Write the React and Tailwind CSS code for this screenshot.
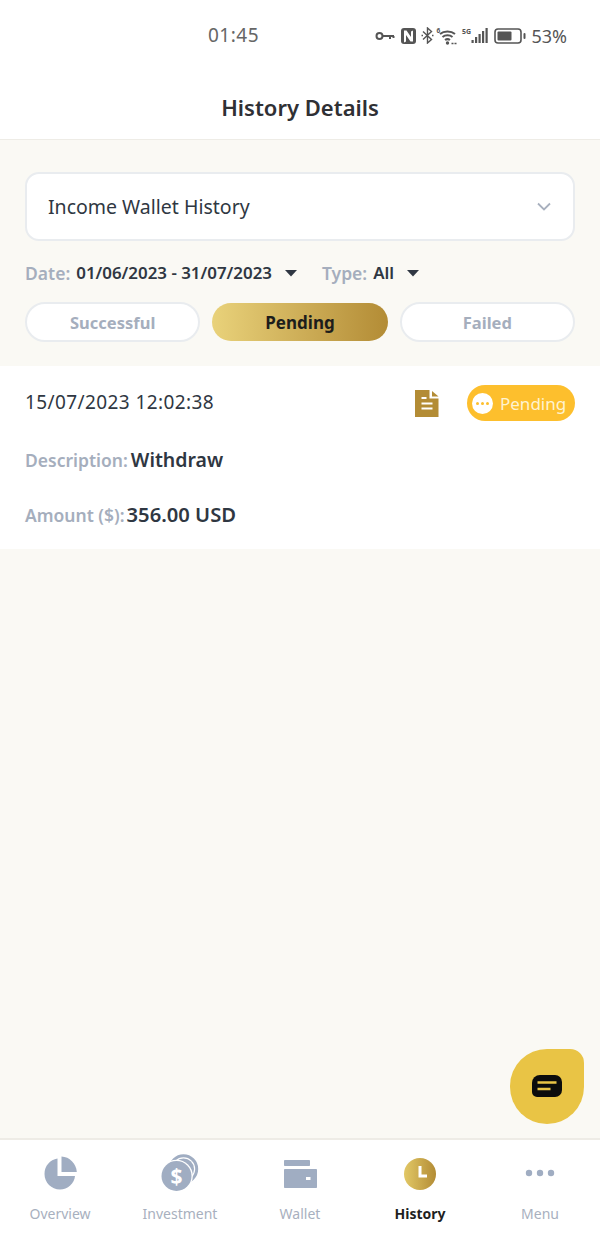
import React from "react";

const FONT = { fontFamily: '"Noto Sans", "Open Sans", sans-serif' };

function StatusIcons() {
  return (
    <div className="flex items-center text-[#555]">
      {/* key */}
      <svg width="20" height="10" viewBox="0 0 20 10" fill="none" stroke="#555" strokeWidth="2">
        <circle cx="4.500" cy="5" r="3" />
        <path d="M8 5h11M15 5v3M18.500 5v2" />
      </svg>
      {/* nfc */}
      <svg className="ml-[6px]" width="15" height="16" viewBox="0 0 15 16">
        <rect x="0" y="0" width="15" height="16" rx="3" fill="#555" />
        <path d="M3 2.500h2.500l4.500 6.500V3.500l2-1v11h-2.500L5 7v6.500l-2 1z" fill="#fff" />
      </svg>
      {/* bluetooth */}
      <svg className="ml-[5px]" width="13" height="17" viewBox="0 0 13 17" fill="none" stroke="#555" strokeWidth="1.400">
        <path d="M2 4.500l8.500 8-4 3.500V1l4 3.500L2 12.500" />
        <path d="M.5 8.500h1.500M11 8.500h1.500" />
      </svg>
      {/* wifi */}
      <svg className="ml-[2px] overflow-visible" width="23" height="18" viewBox="0 0 23 18" fill="none" stroke="#555" strokeWidth="2">
        <path d="M4 7c4-3.400 11-3.400 15 0" />
        <path d="M6.500 10c2.700-2.200 7.300-2.200 10 0" />
        <path d="M9 13c1.400-1 3.600-1 5 0" />
        <circle cx="11.500" cy="16" r="1.700" fill="#555" stroke="none" />
        <path d="M15.500 16.500h6" strokeWidth="1.500" strokeDasharray="2 1" />
        <text x="0.500" y="6" fontSize="6.500" fontWeight="700" fill="#555" stroke="none">6</text>
      </svg>
      {/* signal */}
      <svg className="ml-[3px] overflow-visible" width="27" height="17" viewBox="0 0 27 17" fill="#555">
        <text x="0" y="7" fontSize="7" fontWeight="700">5G</text>
        <rect x="9.500" y="13" width="2.200" height="3" />
        <rect x="13" y="10" width="2.200" height="6" />
        <rect x="16.500" y="7" width="2.200" height="9" />
        <rect x="20" y="4" width="2.200" height="12" />
        <rect x="23.500" y="1" width="2.200" height="15" />
      </svg>
      {/* battery */}
      <svg className="ml-[5px]" width="32" height="16" viewBox="0 0 32 16">
        <rect x="1" y="1" width="26" height="14" rx="3" fill="none" stroke="#555" strokeWidth="1.600" />
        <rect x="3.500" y="3.500" width="14" height="9" rx="1" fill="#555" />
        <rect x="29.500" y="5" width="2" height="6" rx="1" fill="#555" />
      </svg>
      <span className="ml-[5px] text-[18px] leading-none">53%</span>
    </div>
  );
}

function Caret() {
  return (
    <svg width="12" height="7" viewBox="0 0 12 7" className="block">
      <path d="M0 0h12L6 6.500z" fill="#2f3742" />
    </svg>
  );
}

function Pill({ children, active }) {
  if (active) {
    return (
      <div className="flex h-[38px] w-[176px] items-center justify-center rounded-full bg-gradient-to-r from-[#e9d27a] to-[#b38c35] pt-[2px] text-[17px] font-bold text-[#1d1d1b]">
        {children}
      </div>
    );
  }
  return (
    <div className="flex h-[40px] w-[176px] items-center justify-center rounded-full border-2 border-[#e9ecef] bg-white pt-[2px] text-[16.500px] font-bold text-[#a5aebd]">
      {children}
    </div>
  );
}

function NavItem({ icon, label, active }) {
  return (
    <div className="flex w-[120px] flex-col items-center">
      <div className="flex h-[38px] items-center justify-center">{icon}</div>
      <span className={`mt-[12px] text-[14px] leading-[20px] ${active ? "font-bold text-[#1f1f1f]" : "text-[#a8b0be]"}`}>
        {label}
      </span>
    </div>
  );
}

const navIcons = {
  overview: (
    <svg width="34" height="34" viewBox="0 0 34 34" fill="#a0adc2">
      <path d="M14.500 2.500v17.500h17.500c-.6 7.600-7.200 13.500-15 13.500C8.400 33.500 1.500 26.600 1.500 18 1.500 10 7 3.500 14.500 2.500z" />
      <path d="M18.500 .5c8 .4 14.700 6.800 15.300 15.500H18.500z" />
    </svg>
  ),
  investment: (
    <svg width="38" height="38" viewBox="0 0 38 38">
      <circle cx="22.500" cy="15" r="13.200" fill="#fff" stroke="#a0adc2" strokeWidth="3" />
      <circle cx="22.500" cy="15" r="10.500" fill="#a0adc2" />
      <circle cx="15.500" cy="22" r="16.300" fill="#fff" />
      <circle cx="15.500" cy="22" r="15" fill="#a0adc2" />
      <text x="15.500" y="29.500" fontSize="21" fontWeight="700" fill="#fff" textAnchor="middle" fontFamily="Noto Sans">$</text>
    </svg>
  ),
  wallet: (
    <svg width="33" height="30" viewBox="0 -2 33 30" fill="#a0adc2">
      <rect x="0" y="0" width="26" height="6" rx="0.800" />
      <rect x="0" y="9" width="33" height="19" rx="0.800" />
      <rect x="22" y="17" width="4.500" height="3" fill="#fff" />
    </svg>
  ),
  history: (
    <svg width="32" height="34" viewBox="0 -2 32 34">
      <defs>
        <linearGradient id="hist" x1="0" y1="0" x2="1" y2="0">
          <stop offset="0" stopColor="#e2c866" />
          <stop offset="1" stopColor="#b38c35" />
        </linearGradient>
      </defs>
      <circle cx="16" cy="16" r="16" fill="url(#hist)" />
      <path d="M16 8v10h7" fill="none" stroke="#fff" strokeWidth="3" />
    </svg>
  ),
  menu: (
    <svg width="30" height="8" viewBox="0 0 30 8" fill="#a0adc2">
      <circle cx="4" cy="4" r="3.200" />
      <circle cx="15" cy="4" r="3.200" />
      <circle cx="26" cy="4" r="3.200" />
    </svg>
  ),
};

export default function App() {
  return (
    <div className="relative flex h-[1238px] w-[600px] flex-col overflow-hidden bg-white" style={FONT}>
      {/* status bar */}
      <div className="flex h-[70px] items-center justify-between pl-[208px] pr-[33px] pt-[1px]">
        <span className="text-[19px] leading-none tracking-[0.5px] text-[#666]">01:45</span>
        <StatusIcons />
      </div>

      <div className="flex h-[70px] items-center justify-center border-b border-[#eeece6] pt-[6px]">
        <h1 className="text-[22px] font-semibold text-[#2f3034]">History Details</h1>
      </div>

      <main className="flex-1 bg-[#faf9f4]">
        <div className="px-[25px] pt-[32px]">
          <div className="flex h-[69px] items-center justify-between rounded-[14px] border-2 border-[#e9ecef] bg-white pl-[21px] pr-[21px]">
            <span className="text-[19.500px] text-[#2f3742]">Income Wallet History</span>
            <svg width="16" height="10" viewBox="0 0 16 10" fill="none" stroke="#a8b0be" strokeWidth="1.800">
              <path d="M2 1.500l6 6 6-6" />
            </svg>
          </div>

          <div className="mt-[20px] flex h-[24px] items-center text-[16.900px] font-semibold">
            <span className="text-[17.500px] text-[#a5aebd]">Date:</span>
            <span className="ml-[6px] text-[#2f3742]">01/06/2023 - 31/07/2023</span>
            <span className="ml-[13px]"><Caret /></span>
            <span className="ml-[25px] text-[17.500px] text-[#a5aebd]">Type:</span>
            <span className="ml-[6px] text-[#2f3742]">All</span>
            <span className="ml-[13px]"><Caret /></span>
          </div>

          <div className="mt-[17px] flex items-center gap-[12px]">
            <Pill>Successful</Pill>
            <Pill active>Pending</Pill>
            <Pill>Failed</Pill>
          </div>
        </div>

        <div className="mt-[24px] h-[183px] bg-white px-[25px] pt-[18px]">
          <div className="flex h-[36px] items-center justify-between">
            <span className="text-[19px] tracking-[0.4px] text-[#2f3742]">15/07/2023 12:02:38</span>
            <div className="mt-[2px] flex items-center">
              <svg width="24" height="27" viewBox="0 0 24 27">
                <path d="M0 0h14.500v8.500h9V27H0z" fill="#b38c35" />
                <path d="M17 1l6.500 5.500H17z" fill="#b38c35" />
                <path d="M6.500 8h5M6.500 13.500h11M6.500 18.500h11" stroke="#fff" strokeWidth="2" />
              </svg>
              <div className="ml-[28px] flex h-[36px] w-[108px] items-center rounded-full bg-[#fdbf2d] pl-[5px]">
                <span className="flex h-[21px] w-[21px] items-center justify-center gap-[2px] rounded-full bg-white">
                  <i className="h-[3px] w-[3px] rounded-full bg-[#fdbf2d]" />
                  <i className="h-[3px] w-[3px] rounded-full bg-[#fdbf2d]" />
                  <i className="h-[3px] w-[3px] rounded-full bg-[#fdbf2d]" />
                </span>
                <span className="ml-[7px] pt-[1px] text-[17px] text-[#fff3d0]">Pending</span>
              </div>
            </div>
          </div>

          <div className="mt-[25px] flex h-[30px] items-baseline">
            <span className="text-[17.500px] font-semibold text-[#a5aebd]">Description:</span>
            <span className="ml-[3px] text-[19.500px] font-semibold text-[#2f3742]">Withdraw</span>
          </div>
          <div className="mt-[24px] flex h-[30px] items-baseline">
            <span className="text-[17.500px] font-semibold text-[#a5aebd]">Amount ($):</span>
            <span className="ml-[2px] text-[20.200px] font-semibold text-[#2f3742]">356.00 USD</span>
          </div>
        </div>
      </main>

      {/* floating chat button */}
      <div className="absolute left-[510px] top-[1049px] flex h-[75px] w-[74px] items-center justify-center rounded-[37px] rounded-tr-[14px] bg-[#e9c445]">
        <svg width="30" height="23" viewBox="0 0 30 23">
          <path d="M8 0h15a7 7 0 0 1 7 7v8a7 7 0 0 1-7 7H5a5 5 0 0 1-5-5V8a8 8 0 0 1 8-8z" fill="#0c0c0c" />
          <path d="M5.500 7.500h19M5.500 14h13" stroke="#e9c445" strokeWidth="2.400" />
        </svg>
      </div>

      {/* bottom nav */}
      <nav className="flex h-[100px] border-t-2 border-[#eeece6] bg-white pt-[14px]">
        <NavItem icon={navIcons.overview} label="Overview" />
        <NavItem icon={navIcons.investment} label="Investment" />
        <NavItem icon={navIcons.wallet} label="Wallet" />
        <NavItem icon={navIcons.history} label="History" active />
        <NavItem icon={navIcons.menu} label="Menu" />
      </nav>
    </div>
  );
}
